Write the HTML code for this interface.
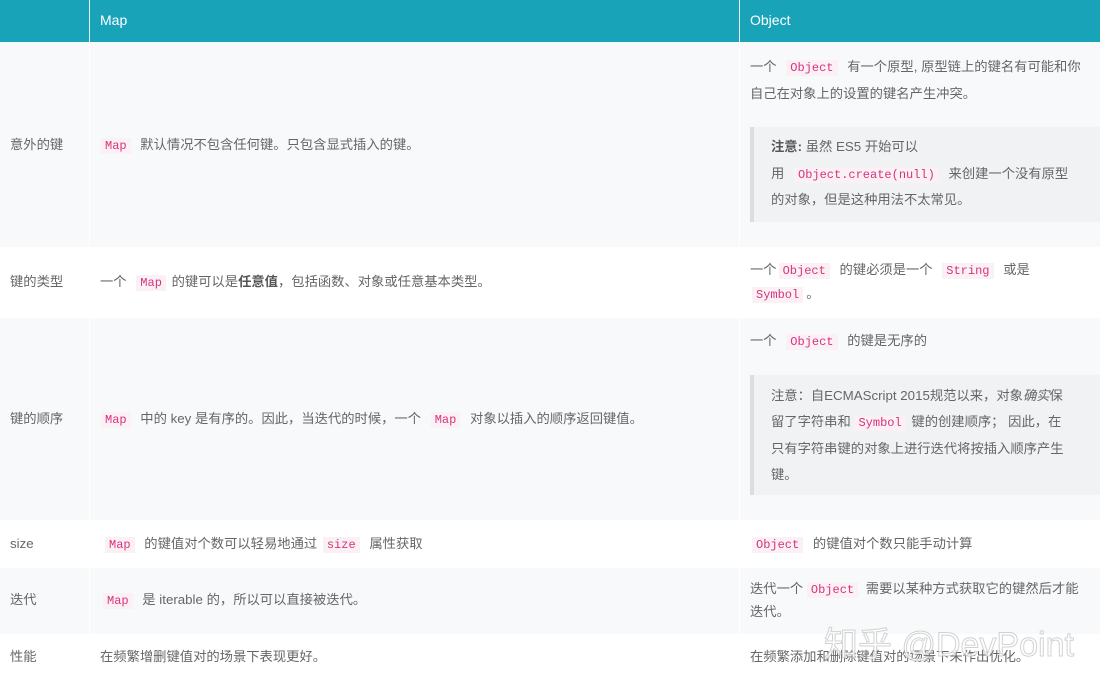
<!DOCTYPE html>
<html><head><meta charset="utf-8"><style>
*{margin:0;padding:0;box-sizing:border-box}
body{width:1100px;height:690px;overflow:hidden;background:#fff;font-family:"Liberation Sans","Noto Sans CJK SC",sans-serif;font-size:13.3px;color:#666;position:relative}
.a{position:absolute}
.l{position:absolute;white-space:nowrap;line-height:20px;height:20px}
code{font-family:"Liberation Mono","DejaVu Sans Mono",monospace;font-size:12px;color:#d6337f;background:#fbf0f4;padding:1px 4px;margin:0 6px}
.hd{background:#19a3b8;color:#fff;font-size:14px}
.bq{position:absolute;background:#f1f2f4;border-left:4px solid #dcdde0}
b{color:#555}
</style></head><body>
<div class="a hd" style="left:0;top:0;width:1100px;height:42px"></div>
<div class="a" style="left:89px;top:0;width:1px;height:42px;background:#e8f6f8"></div>
<div class="a" style="left:739px;top:0;width:1px;height:42px;background:#e8f6f8"></div>
<div class="l" style="left:100px;top:10px;color:#fff;font-size:14px">Map</div>
<div class="l" style="left:750px;top:10px;color:#fff;font-size:14px">Object</div>

<div class="a" style="left:0;top:42px;width:1100px;height:205px;background:#f8f9fa"></div>
<div class="a" style="left:0;top:318px;width:1100px;height:202px;background:#f8f9fa"></div>
<div class="a" style="left:0;top:568px;width:1100px;height:66px;background:#f8f9fa"></div>
<div class="a" style="left:89px;top:42px;width:1px;height:205px;background:#fff"></div>
<div class="a" style="left:739px;top:42px;width:1px;height:205px;background:#fff"></div>
<div class="a" style="left:89px;top:318px;width:1px;height:202px;background:#fff"></div>
<div class="a" style="left:739px;top:318px;width:1px;height:202px;background:#fff"></div>
<div class="a" style="left:89px;top:568px;width:1px;height:66px;background:#fff"></div>
<div class="a" style="left:739px;top:568px;width:1px;height:66px;background:#fff"></div>

<!-- row1 -->
<div class="l" style="left:10px;top:135px">意外的键</div>
<div class="l" style="left:95px;top:135px"><code>Map</code> 默认情况不包含任何键。只包含显式插入的键。</div>
<div class="l" style="left:750px;top:57px">一个 <code>Object</code> 有一个原型, 原型链上的键名有可能和你</div>
<div class="l" style="left:750px;top:84px">自己在对象上的设置的键名产生冲突。</div>
<div class="bq" style="left:750px;top:127px;width:350px;height:95px"></div>
<div class="l" style="left:771px;top:137px"><b>注意:</b> 虽然 ES5 开始可以</div>
<div class="l" style="left:771px;top:164px">用 <code>Object.create(null)</code> 来创建一个没有原型</div>
<div class="l" style="left:771px;top:190px">的对象，但是这种用法不太常见。</div>

<!-- row2 -->
<div class="l" style="left:10px;top:272px">键的类型</div>
<div class="l" style="left:100px;top:272px">一个 <code style="margin:0 2px 0 6px">Map</code> 的键可以是<b>任意值</b>，包括函数、对象或任意基本类型。</div>
<div class="l" style="left:750px;top:260px">一个<code style="margin:0 6px 0 2px">Object</code> 的键必须是一个 <code>String</code> 或是</div>
<div class="l" style="left:750px;top:284px"><code style="margin:0 3px 0 2px">Symbol</code>。</div>

<!-- row3 -->
<div class="l" style="left:10px;top:409px">键的顺序</div>
<div class="l" style="left:95px;top:409px"><code>Map</code> 中的 key 是有序的。因此，当迭代的时候，一个 <code>Map</code> 对象以插入的顺序返回键值。</div>
<div class="l" style="left:750px;top:331px">一个 <code>Object</code> 的键是无序的</div>
<div class="bq" style="left:750px;top:375px;width:350px;height:120px"></div>
<div class="l" style="left:771px;top:386px">注意：自ECMAScript 2015规范以来，对象<i>确实</i>保</div>
<div class="l" style="left:771px;top:412px">留了字符串和 <code style="margin:0 2px 0 0">Symbol</code> 键的创建顺序； 因此，在</div>
<div class="l" style="left:771px;top:439px">只有字符串键的对象上进行迭代将按插入顺序产生</div>
<div class="l" style="left:771px;top:465px">键。</div>

<!-- row4 -->
<div class="l" style="left:10px;top:534px">size</div>
<div class="l" style="left:105px;top:534px"><code style="margin:0 6px 0 0">Map</code> 的键值对个数可以轻易地通过 <code style="margin:0 6px 0 2px">size</code> 属性获取</div>
<div class="l" style="left:750px;top:534px"><code style="margin:0 6px 0 2px">Object</code> 的键值对个数只能手动计算</div>

<!-- row5 -->
<div class="l" style="left:10px;top:590px">迭代</div>
<div class="l" style="left:101px;top:590px"><code style="margin:0 6px 0 2px">Map</code> 是 iterable 的，所以可以直接被迭代。</div>
<div class="l" style="left:750px;top:579px">迭代一个 <code style="margin:0 4px 0 0">Object</code> 需要以某种方式获取它的键然后才能</div>
<div class="l" style="left:750px;top:602px">迭代。</div>

<!-- row6 -->
<div class="l" style="left:10px;top:647px">性能</div>
<div class="l" style="left:100px;top:647px">在频繁增删键值对的场景下表现更好。</div>
<div class="l" style="left:750px;top:647px">在频繁添加和删除键值对的场景下未作出优化。</div>
<div class="l" style="left:824px;top:624px;height:42px;line-height:42px;font-size:34px;color:rgba(255,255,255,0.75);-webkit-text-stroke:1px rgba(180,180,180,0.6)">知乎 @DevPoint</div>
</body></html>
